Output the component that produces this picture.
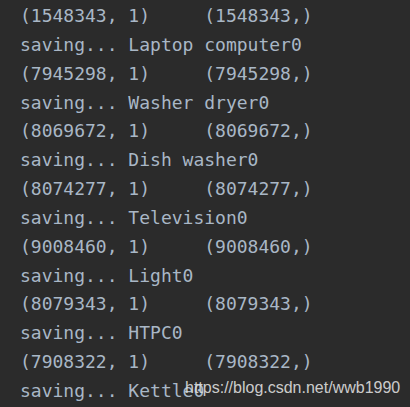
import React from 'react';

const lines = [
  '(1548343, 1)     (1548343,)',
  'saving... Laptop computer0',
  '(7945298, 1)     (7945298,)',
  'saving... Washer dryer0',
  '(8069672, 1)     (8069672,)',
  'saving... Dish washer0',
  '(8074277, 1)     (8074277,)',
  'saving... Television0',
  '(9008460, 1)     (9008460,)',
  'saving... Light0',
  '(8079343, 1)     (8079343,)',
  'saving... HTPC0',
  '(7908322, 1)     (7908322,)',
  'saving... Kettle0',
];

const App = () => {
  return (
    <div className="relative w-[410px] h-[407px] overflow-hidden bg-[#2b2b2b]">
      {/* console output */}
      <div className="pl-[20px] pt-[2px] font-['DejaVu_Sans_Mono',monospace] text-[18px] leading-[28.85px] text-[#a9b7c6] whitespace-pre">
        {lines.map((line, i) => (
          <div key={i}>{line}</div>
        ))}
      </div>

      {/* watermark */}
      <span className="absolute left-[185px] top-[378px] font-['Liberation_Sans',Arial,sans-serif] text-[16px] leading-[19px] text-[#e0e0e0]/90">
        https://blog.csdn.net/wwb1990
      </span>
    </div>
  );
};

export default App;
